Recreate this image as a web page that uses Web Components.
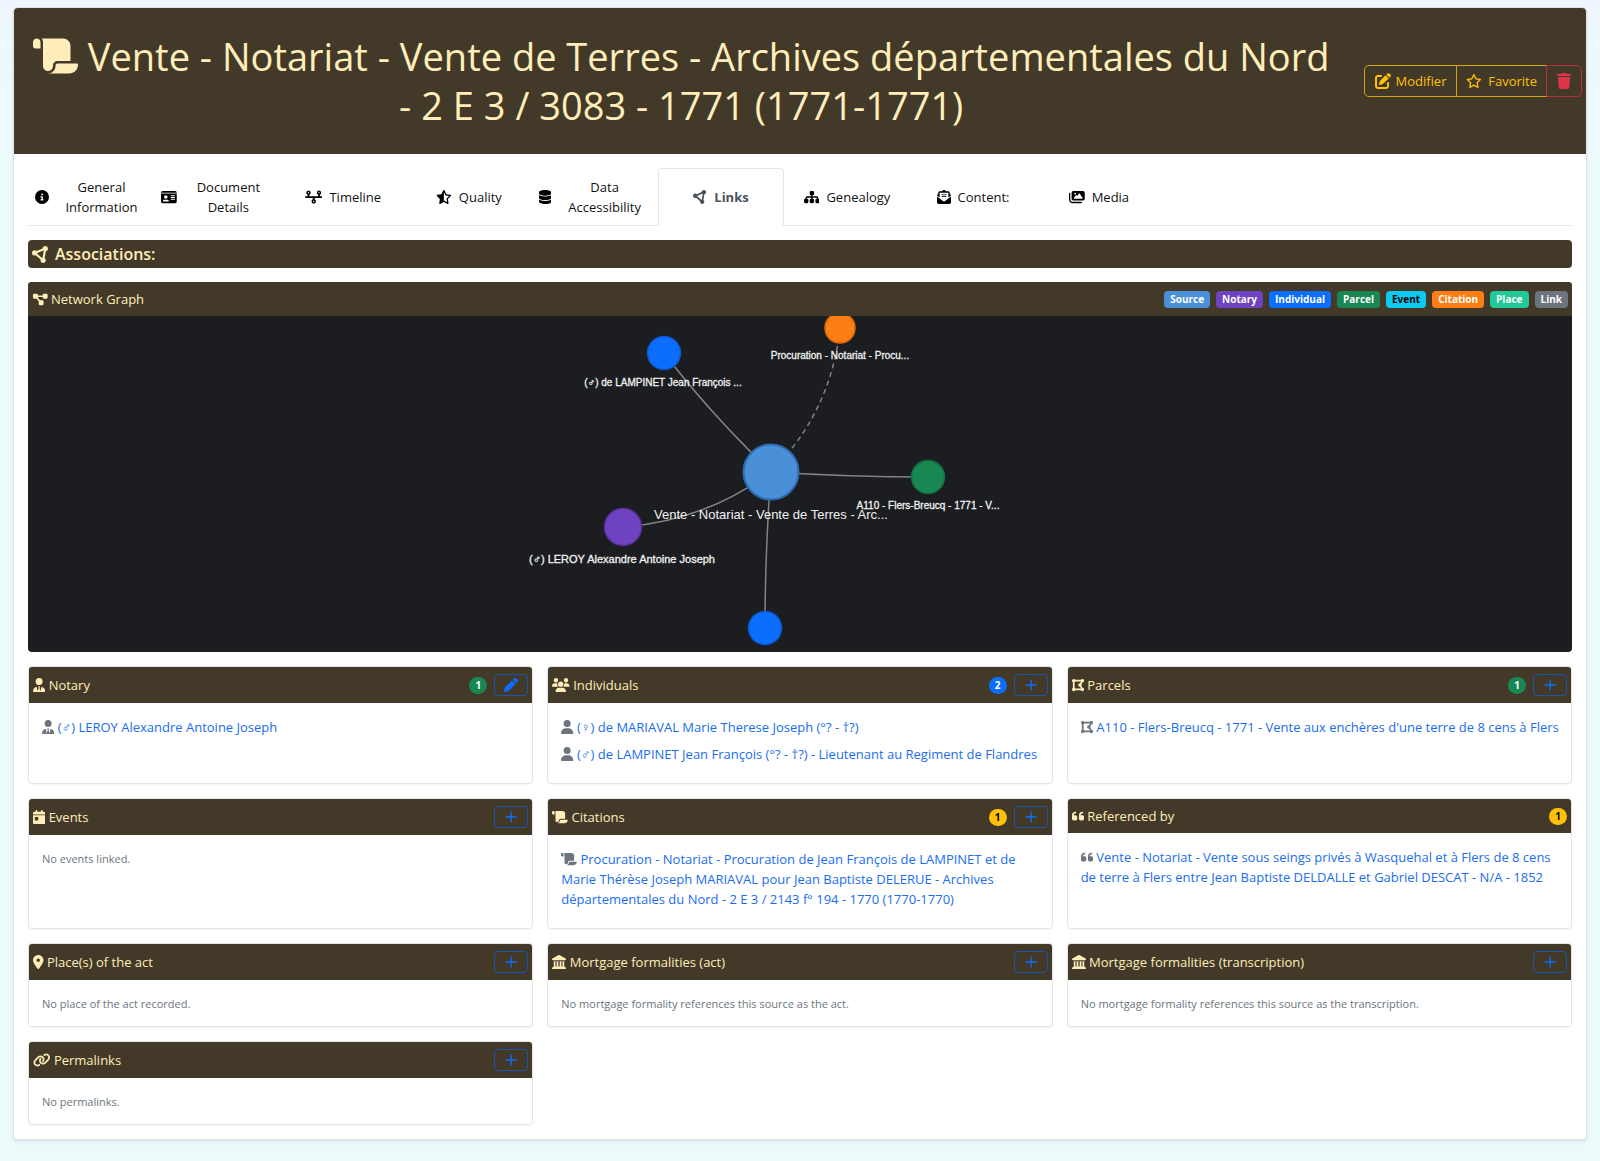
<!DOCTYPE html>
<html lang="en">
<head>
<meta charset="utf-8">
<meta name="viewport" content="width=device-width, initial-scale=1">
<title>Vente - Notariat - Links</title>
<style>
  :root {
    --brown: #433929;
    --cream: #ffeeba;
    --link: #1a6df0;
    --muted: #6c757d;
    --line: #e3e5e8;
  }
  * { box-sizing: border-box; }
  body {
    margin: 0;
    min-height: 100vh;
    padding: 8px 14px 21px;
    background: linear-gradient(#f0f6ff, #ecfafc 90px);
    color: #111;
    font: 13px/20px "Segoe UI", "Open Sans", "Noto Sans", sans-serif;
  }
</style>
</head>
<body>

<source-page>
  <page-header slot="header">
    <fa-icon slot="icon" name="scroll"></fa-icon>
    Vente - Notariat - Vente de Terres - Archives départementales du Nord - 2 E 3 / 3083 - 1771 (1771-1771)
    <action-group slot="actions"></action-group>
  </page-header>

  <tab-bar>
    <tab-item icon="info">General Information</tab-item>
    <tab-item icon="idcard">Document Details</tab-item>
    <tab-item icon="timeline">Timeline</tab-item>
    <tab-item icon="starhalf">Quality</tab-item>
    <tab-item icon="database">Data Accessibility</tab-item>
    <tab-item icon="nodes" active>Links</tab-item>
    <tab-item icon="sitemap">Genealogy</tab-item>
    <tab-item icon="envelope">Content:</tab-item>
    <tab-item icon="images">Media</tab-item>
  </tab-bar>

  <section-title icon="nodes">Associations:</section-title>

  <graph-panel heading="Network Graph">
    <legend-badge slot="legend" style="--c:#4a90d9">Source</legend-badge>
    <legend-badge slot="legend" style="--c:#6f42c1">Notary</legend-badge>
    <legend-badge slot="legend" style="--c:#0d6efd">Individual</legend-badge>
    <legend-badge slot="legend" style="--c:#198754">Parcel</legend-badge>
    <legend-badge slot="legend" style="--c:#0dcaf0;--t:#000">Event</legend-badge>
    <legend-badge slot="legend" style="--c:#fd7e14">Citation</legend-badge>
    <legend-badge slot="legend" style="--c:#20c997">Place</legend-badge>
    <legend-badge slot="legend" style="--c:#6c757d">Link</legend-badge>
  </graph-panel>

  <card-grid>
    <link-card icon="usertie" heading="Notary" count="1" tone="green" action="edit">
      <link-row icon="usertie">(♂) LEROY Alexandre Antoine Joseph</link-row>
    </link-card>
    <link-card icon="users" heading="Individuals" count="2" tone="blue" action="add">
      <link-row icon="user">(♀) de MARIAVAL Marie Therese Joseph (°? - †?)</link-row>
      <link-row icon="user">(♂) de LAMPINET Jean François (°? - †?) - Lieutenant au Regiment de Flandres</link-row>
    </link-card>
    <link-card icon="polygon" heading="Parcels" count="1" tone="green" action="add">
      <link-row icon="polygon">A110 - Flers-Breucq - 1771 - Vente aux enchères d'une terre de 8 cens à Flers</link-row>
    </link-card>
    <link-card icon="calendar" heading="Events" action="add">
      <empty-note>No events linked.</empty-note>
    </link-card>
    <link-card icon="scroll" heading="Citations" count="1" tone="yellow" action="add">
      <link-row icon="scroll">Procuration - Notariat - Procuration de Jean François de LAMPINET et de Marie Thérèse Joseph MARIAVAL pour Jean Baptiste DELERUE - Archives départementales du Nord - 2 E 3 / 2143 f° 194 - 1770 (1770-1770)</link-row>
    </link-card>
    <link-card icon="quote" heading="Referenced by" count="1" tone="yellow">
      <link-row icon="quote">Vente - Notariat - Vente sous seings privés à Wasquehal et à Flers de 8 cens de terre à Flers entre Jean Baptiste DELDALLE et Gabriel DESCAT - N/A - 1852</link-row>
    </link-card>
    <link-card icon="pin" heading="Place(s) of the act" action="add">
      <empty-note>No place of the act recorded.</empty-note>
    </link-card>
    <link-card icon="landmark" heading="Mortgage formalities (act)" action="add">
      <empty-note>No mortgage formality references this source as the act.</empty-note>
    </link-card>
    <link-card icon="landmark" heading="Mortgage formalities (transcription)" action="add">
      <empty-note>No mortgage formality references this source as the transcription.</empty-note>
    </link-card>
    <link-card icon="link" heading="Permalinks" action="add">
      <empty-note>No permalinks.</empty-note>
    </link-card>
  </card-grid>
</source-page>

<script>
const BAR = 'c0-8.8 7.2-16 16-16H496c8.8 0 16 7.2 16 16s-7.2 16-16 16H368c-8.8 0-16-7.2-16-16z';
const ICONS = {
  scroll: [576, 'M0 80v48c0 17.7 14.3 32 32 32H48 96V80c0-26.5-21.5-48-48-48S0 53.5 0 80zM112 32c10 13.4 16 30 16 48V384c0 35.3 28.7 64 64 64s64-28.7 64-64v-5.3c0-32.4 26.3-58.7 58.7-58.7H480V128c0-53-43-96-96-96H112zM464 480c61.9 0 112-50.1 112-112c0-8.8-7.2-16-16-16H314.7c-14.7 0-26.7 11.9-26.7 26.7V384c0 53-43 96-96 96H368h96z'],
  info: [512, 'M256 512A256 256 0 1 0 256 0a256 256 0 1 0 0 512zM216 336h24V272H216c-13.3 0-24-10.7-24-24s10.7-24 24-24h48c13.3 0 24 10.7 24 24v88h8c13.3 0 24 10.7 24 24s-10.7 24-24 24H216c-13.3 0-24-10.7-24-24s10.7-24 24-24zm40-208a32 32 0 1 1 0 64 32 32 0 1 1 0-64z'],
  idcard: [576, 'M0 96l576 0c0-35.3-28.7-64-64-64H64C28.7 32 0 60.7 0 96zm0 32V416c0 35.3 28.7 64 64 64H512c35.3 0 64-28.7 64-64V128H0zM64 405.3c0-29.5 23.9-53.3 53.3-53.3H234.7c29.5 0 53.3 23.9 53.3 53.3c0 5.9-4.8 10.7-10.7 10.7H74.7c-5.9 0-10.7-4.8-10.7-10.7zM176 192a64 64 0 1 1 0 128 64 64 0 1 1 0-128zM352 208' + BAR + 'M352 272' + BAR + 'M352 336' + BAR],
  timeline: [640, 'M128 72a24 24 0 1 1 0 48 24 24 0 1 1 0-48zm32 97.3c28.3-12.3 48-40.5 48-73.3c0-44.2-35.8-80-80-80S48 51.8 48 96c0 32.8 19.7 61 48 73.3V224H32c-17.7 0-32 14.3-32 32s14.3 32 32 32H288v54.7c-28.3 12.3-48 40.5-48 73.3c0 44.2 35.8 80 80 80s80-35.8 80-80c0-32.8-19.7-61-48-73.3V288H608c17.7 0 32-14.3 32-32s-14.3-32-32-32H544V169.3c28.3-12.3 48-40.5 48-73.3c0-44.2-35.8-80-80-80s-80 35.8-80 80c0 32.8 19.7 61 48 73.3V224H160V169.3zM488 96a24 24 0 1 1 48 0 24 24 0 1 1 -48 0zM320 392a24 24 0 1 1 0 48 24 24 0 1 1 0-48z'],
  starhalf: [576, 'M309.5 13.5C305.5 5.2 297.1 0 287.9 0s-17.5 5.2-21.6 13.5L197.7 154.8 44.5 177.5c-9 1.3-16.5 7.6-19.3 16.3s-.5 18.1 5.9 24.5L142.2 328.4 116 483.9c-1.5 9 2.2 18.1 9.7 23.5s17.3 6 25.3 1.7l137-73.2 137 73.2c8.1 4.3 17.9 3.7 25.3-1.7s11.2-14.5 9.7-23.5L433.6 328.4 544.8 218.2c6.5-6.4 8.7-15.9 5.9-24.5s-10.3-14.9-19.3-16.3L378.1 154.8 309.5 13.5zM288 384.7V79.1l52.5 108.1c3.5 7.1 10.2 12.1 18.1 13.3l118.3 17.5L391 303c-5.5 5.5-8.1 13.3-6.8 21l20.2 119.6L299.2 387.5c-3.5-1.9-7.4-2.8-11.2-2.8z'],
  star: [576, 'M287.9 0c9.2 0 17.6 5.2 21.6 13.5l68.6 141.3 153.2 22.6c9 1.3 16.5 7.6 19.3 16.3s.5 18.1-5.9 24.5L433.6 328.4l26.2 155.6c1.5 9-2.2 18.1-9.7 23.5s-17.3 6-25.3 1.7l-137-73.2L151 509.1c-8.1 4.3-17.9 3.7-25.3-1.7s-11.2-14.5-9.7-23.5l26.2-155.6L31.1 218.2c-6.5-6.4-8.7-15.9-5.9-24.5s10.3-14.9 19.3-16.3l153.2-22.6L266.3 13.5C270.4 5.2 278.7 0 287.9 0zm0 79L235.4 187.2c-3.5 7.1-10.2 12.1-18.1 13.3L99 217.9 184.9 303c5.5 5.5 8.1 13.3 6.8 21L171.4 443.7l105.2-56.2c7.1-3.8 15.6-3.8 22.6 0l105.2 56.2L384.2 324.1c-1.3-7.7 1.2-15.5 6.8-21l85.9-85.1L358.6 200.5c-7.8-1.2-14.6-6.1-18.1-13.3L287.9 79z'],
  database: [448, 'M448 80v48c0 44.2-100.3 80-224 80S0 172.2 0 128V80C0 35.8 100.3 0 224 0S448 35.8 448 80zM393.2 214.7c20.8-7.4 39.9-16.9 54.8-28.6V288c0 44.2-100.3 80-224 80S0 332.2 0 288V186.1c14.9 11.8 34 21.2 54.8 28.6C99.7 230.7 159.5 240 224 240s124.3-9.3 169.2-25.3zM0 346.1c14.9 11.8 34 21.2 54.8 28.6C99.7 390.7 159.5 400 224 400s124.3-9.3 169.2-25.3c20.8-7.4 39.9-16.9 54.8-28.6V432c0 44.2-100.3 80-224 80S0 476.2 0 432V346.1z'],
  nodes: [512, 'M418.4 157.9c35.3-8.3 61.6-40 61.6-77.9c0-44.2-35.8-80-80-80c-43.4 0-78.7 34.5-80 77.5L136.2 151.1C121.7 136.8 101.9 128 80 128c-44.2 0-80 35.8-80 80s35.8 80 80 80c12.2 0 23.8-2.7 34.1-7.6L259.7 407.8c-2.4 7.6-3.7 15.8-3.7 24.2c0 44.2 35.8 80 80 80s80-35.8 80-80c0-27.7-14-52.1-35.4-66.4l37.8-207.7zM156.3 232.2c2.2-6.9 3.5-14.2 3.7-21.7l183.8-73.5c3.6 3.5 7.4 6.7 11.6 9.5L317.6 354.1c-5.5 1.3-10.8 3.1-15.8 5.5L156.3 232.2z'],
  sitemap: [576, 'M208 80c0-26.5 21.5-48 48-48h64c26.5 0 48 21.5 48 48v64c0 26.5-21.5 48-48 48h-8v40H464c30.9 0 56 25.1 56 56v32h8c26.5 0 48 21.5 48 48v64c0 26.5-21.5 48-48 48H464c-26.5 0-48-21.5-48-48V368c0-26.5 21.5-48 48-48h8V288c0-4.4-3.6-8-8-8H312v40h8c26.5 0 48 21.5 48 48v64c0 26.5-21.5 48-48 48H256c-26.5 0-48-21.5-48-48V368c0-26.5 21.5-48 48-48h8V280H112c-4.4 0-8 3.6-8 8v32h8c26.5 0 48 21.5 48 48v64c0 26.5-21.5 48-48 48H48c-26.5 0-48-21.5-48-48V368c0-26.5 21.5-48 48-48h8V288c0-30.9 25.1-56 56-56H264V192h-8c-26.5 0-48-21.5-48-48V80z'],
  envelope: [512, 'M215.4 96H144 107.8 96v8.8V144v40.4 89L.2 202.5c1.6-18.1 10.9-34.9 25.7-45.8L48 140.3V96c0-26.5 21.5-48 48-48h76.6l49.9-36.9C232.2 3.9 243.9 0 256 0s23.8 3.9 33.5 11L339.4 48H416c26.5 0 48 21.5 48 48v44.3l22.1 16.4c14.8 10.9 24.1 27.7 25.7 45.8L416 273.4v-89V144 104.8 96H404.2 368 296.6 215.4zM0 448V242.1L217.6 403.3c11.1 8.2 24.6 12.7 38.4 12.7s27.3-4.4 38.4-12.7L512 242.1V448c0 35.3-28.7 64-64 64H64c-35.3 0-64-28.7-64-64zM176 160H336c8.8 0 16 7.2 16 16s-7.2 16-16 16H176c-8.8 0-16-7.2-16-16s7.2-16 16-16zm0 64H336c8.8 0 16 7.2 16 16s-7.2 16-16 16H176c-8.8 0-16-7.2-16-16s7.2-16 16-16z'],
  images: [576, 'M160 32c-35.3 0-64 28.7-64 64V320c0 35.3 28.7 64 64 64H512c35.3 0 64-28.7 64-64V96c0-35.3-28.7-64-64-64H160zM396 138.7l96 144c4.9 7.4 5.4 16.8 1.2 24.6S480.9 320 472 320H328 280 200c-9.2 0-17.6-5.3-21.6-13.6s-2.9-18.2 2.9-25.4l64-80c4.6-5.7 11.4-9 18.7-9s14.2 3.3 18.7 9l17.3 21.6 56-84C360.5 132 368 128 376 128s15.5 4 20 10.7zM192 128a32 32 0 1 1 64 0 32 32 0 1 1 -64 0zM48 120c0-13.3-10.7-24-24-24S0 106.7 0 120V344c0 75.1 60.9 136 136 136H456c13.3 0 24-10.7 24-24s-10.7-24-24-24H136c-48.6 0-88-39.4-88-88V120z'],
  diagram: [576, 'M0 80C0 53.5 21.5 32 48 32h96c26.5 0 48 21.5 48 48V96H384V80c0-26.5 21.5-48 48-48h96c26.5 0 48 21.5 48 48v96c0 26.5-21.5 48-48 48H432c-26.5 0-48-21.5-48-48V160H192v16c0 1.7-.1 3.4-.3 5L272 288h96c26.5 0 48 21.5 48 48v96c0 26.5-21.5 48-48 48H272c-26.5 0-48-21.5-48-48V336c0-1.7 .1-3.4 .3-5L144 224H48c-26.5 0-48-21.5-48-48V80z'],
  edit: [512, 'M471.6 21.7c-21.9-21.9-57.3-21.9-79.2 0L362.3 51.7l97.9 97.9 30.1-30.1c21.9-21.9 21.9-57.3 0-79.2L471.6 21.7zm-299.2 220c-6.1 6.1-10.8 13.6-13.5 21.9l-29.6 88.8c-2.9 8.6-.6 18.1 5.8 24.6s15.9 8.7 24.6 5.8l88.8-29.6c8.2-2.7 15.7-7.4 21.9-13.5L437.7 172.3 339.7 74.3 172.4 241.7zM96 64C43 64 0 107 0 160V416c0 53 43 96 96 96H352c53 0 96-43 96-96V320c0-17.7-14.3-32-32-32s-32 14.3-32 32v96c0 17.7-14.3 32-32 32H96c-17.7 0-32-14.3-32-32V160c0-17.7 14.3-32 32-32h96c17.7 0 32-14.3 32-32s-14.3-32-32-32H96z'],
  trash: [448, 'M135.2 17.7L128 32H32C14.3 32 0 46.3 0 64S14.3 96 32 96H416c17.7 0 32-14.3 32-32s-14.3-32-32-32H320l-7.2-14.3C307.4 6.8 296.3 0 284.2 0H163.8c-12.1 0-23.2 6.8-28.6 17.7zM416 128H32L53.2 467c1.6 25.3 22.6 45 47.9 45H346.9c25.3 0 46.3-19.7 47.9-45L416 128z'],
  usertie: [448, 'M96 128a128 128 0 1 0 256 0A128 128 0 1 0 96 128zm94.5 200.2l18.6 31L175.8 483.1l-36-146.9c-2-8.1-9.8-13.4-17.9-11.3C51.9 342.4 0 405.8 0 481.3c0 17 13.8 30.7 30.7 30.7H162.5c0 0 0 0 .1 0H168 280h5.5c0 0 0 0 .1 0H417.3c17 0 30.7-13.8 30.7-30.7c0-75.5-51.9-138.9-121.9-156.4c-8.1-2-15.9 3.3-17.9 11.3l-36 146.9L238.9 359.2l18.6-31c6.4-10.7-1.3-24.2-13.7-24.2H224 204.3c-12.4 0-20.1 13.6-13.7 24.2z'],
  users: [640, 'M144 0a80 80 0 1 1 0 160A80 80 0 1 1 144 0zM512 0a80 80 0 1 1 0 160A80 80 0 1 1 512 0zM0 298.7C0 239.8 47.8 192 106.7 192h42.7c15.9 0 31 3.5 44.6 9.7c-1.3 7.2-1.9 14.7-1.9 22.3c0 38.2 16.8 72.5 43.3 96c-.2 0-.4 0-.7 0H21.3C9.6 320 0 310.4 0 298.7zM405.3 320c-.2 0-.4 0-.7 0c26.6-23.5 43.3-57.8 43.3-96c0-7.6-.7-15-1.9-22.3c13.6-6.3 28.7-9.7 44.6-9.7h42.7C592.2 192 640 239.8 640 298.7c0 11.8-9.6 21.3-21.3 21.3H405.3zM224 224a96 96 0 1 1 192 0 96 96 0 1 1 -192 0zM128 485.3C128 411.7 187.7 352 261.3 352H378.7C452.3 352 512 411.7 512 485.3c0 14.7-11.9 26.7-26.7 26.7H154.7c-14.7 0-26.7-11.9-26.7-26.7z'],
  user: [448, 'M224 256A128 128 0 1 0 224 0a128 128 0 1 0 0 256zm-45.7 48C79.8 304 0 383.8 0 482.3C0 498.7 13.3 512 29.7 512H418.3c16.4 0 29.7-13.3 29.7-29.7C448 383.8 368.2 304 269.7 304H178.3z'],
  polygon: [448, 'M96 151.4V360.6c9.7 5.6 17.8 13.7 23.4 23.4H328.6c0-.1 .1-.2 .1-.3l-4.5-7.9-32-56 0 0c-1.4 .1-2.8 .1-4.2 .1c-35.3 0-64-28.7-64-64s28.7-64 64-64c1.4 0 2.8 0 4.2 .1l0 0 32-56 4.5-7.9-.1-.3H119.4c-5.6 9.7-13.7 17.8-23.4 23.4zM384.3 352c35.2 .2 63.7 28.7 63.7 64c0 35.3-28.7 64-64 64c-23.7 0-44.4-12.9-55.4-32H119.4c-11.1 19.1-31.7 32-55.4 32c-35.3 0-64-28.7-64-64c0-23.7 12.9-44.4 32-55.4V151.4C12.9 140.4 0 119.7 0 96C0 60.7 28.7 32 64 32c23.7 0 44.4 12.9 55.4 32H328.6c11.1-19.1 31.7-32 55.4-32c35.3 0 64 28.7 64 64c0 35.3-28.5 63.8-63.7 64l-4.5 7.9-32 56-2.3 4c4.2 8.5 6.5 18 6.5 28.1s-2.3 19.6-6.5 28.1l2.3 4 32 56 4.5 7.9z'],
  calendar: [448, 'M128 0c17.7 0 32 14.3 32 32V64H288V32c0-17.7 14.3-32 32-32s32 14.3 32 32V64h48c26.5 0 48 21.5 48 48v48H0V112C0 85.5 21.5 64 48 64H96V32c0-17.7 14.3-32 32-32zM0 192H448V464c0 26.5-21.5 48-48 48H48c-26.5 0-48-21.5-48-48V192zm80 64c-8.8 0-16 7.2-16 16v96c0 8.8 7.2 16 16 16h96c8.8 0 16-7.2 16-16V272c0-8.8-7.2-16-16-16H80z'],
  quote: [448, 'M0 216C0 149.7 53.7 96 120 96h8c17.7 0 32 14.3 32 32s-14.3 32-32 32h-8c-30.9 0-56 25.1-56 56v8h64c35.3 0 64 28.7 64 64v64c0 35.3-28.7 64-64 64H64c-35.3 0-64-28.7-64-64V320 288 216zm256 0c0-66.3 53.7-120 120-120h8c17.7 0 32 14.3 32 32s-14.3 32-32 32h-8c-30.9 0-56 25.1-56 56v8h64c35.3 0 64 28.7 64 64v64c0 35.3-28.7 64-64 64H320c-35.3 0-64-28.7-64-64V320 288 216z'],
  pin: [384, 'M215.7 499.2C267 435 384 279.4 384 192C384 86 298 0 192 0S0 86 0 192c0 87.4 117 243 168.3 307.2c12.3 15.3 35.1 15.3 47.4 0zM192 128a64 64 0 1 1 0 128 64 64 0 1 1 0-128z'],
  landmark: [512, 'M240.1 4.2c9.8-5.6 21.9-5.6 31.8 0l171.8 98.1L448 104l0 .9 47.9 27.4c12.6 7.2 18.8 22 15.1 36s-16.4 23.8-30.9 23.8H32c-14.5 0-27.2-9.8-30.9-23.8s2.5-28.8 15.1-36L64 104.9V104l4.4-1.6L240.1 4.2zM64 224h64V416h40V224h64V416h48V224h64V416h40V224h64V420.3c.6 .3 1.2 .7 1.8 1.1l48 32c11.7 7.8 17 22.4 12.9 35.9S494.1 512 480 512H32c-14.1 0-26.5-9.2-30.6-22.7s1.1-28.1 12.9-35.9l48-32c.6-.4 1.2-.7 1.8-1.1V224z'],
  link: [640, 'M579.8 267.7c56.5-56.5 56.5-148 0-204.5c-50-50-128.8-56.5-186.3-15.4l-1.6 1.1c-14.4 10.3-17.7 30.3-7.4 44.6s30.3 17.7 44.6 7.4l1.6-1.1c32.1-22.9 76-19.3 103.8 8.6c31.5 31.5 31.5 82.5 0 114L422.3 334.8c-31.5 31.5-82.5 31.5-114 0c-27.9-27.9-31.5-71.8-8.6-103.8l1.1-1.6c10.3-14.4 6.9-34.4-7.4-44.6s-34.4-6.9-44.6 7.4l-1.1 1.6C206.5 251.2 213 330 263 380c56.5 56.5 148 56.5 204.5 0L579.8 267.7zM60.2 244.3c-56.5 56.5-56.5 148 0 204.5c50 50 128.8 56.5 186.3 15.4l1.6-1.1c14.4-10.3 17.7-30.3 7.4-44.6s-30.3-17.7-44.6-7.4l-1.6 1.1c-32.1 22.9-76 19.3-103.8-8.6C74 372 74 321 105.5 289.5L217.7 177.2c31.5-31.5 82.5-31.5 114 0c27.9 27.9 31.5 71.8 8.6 103.9l-1.1 1.6c-10.3 14.4-6.9 34.4 7.4 44.6s34.4 6.9 44.6-7.4l1.1-1.6C433.5 260.8 427 182 377 132c-56.5-56.5-148-56.5-204.5 0L60.2 244.3z'],
  pen: [512, 'M362.7 19.3L314.3 67.7 444.3 197.7l48.4-48.4c25-25 25-65.5 0-90.5L453.3 19.3c-25-25-65.5-25-90.5 0zm-71 71L58.6 323.5c-10.4 10.4-18 23.3-22.2 37.4L1 481.2C-1.5 489.7 .8 498.8 7 505s15.3 8.5 23.7 6.1l120.3-35.4c14.1-4.2 27-11.8 37.4-22.2L421.7 220.3 291.7 90.3z'],
  plus: [448, 'M200 56h48v176h176v48H248v176h-48V280H24v-48h176z']
};

const define = (name, render) => customElements.define(name, class extends HTMLElement {
  connectedCallback() {
    if (this.shadowRoot) return;
    this.attachShadow({ mode: 'open' }).innerHTML =
      '<style>*{box-sizing:border-box}</style>' + render(this);
  }
});
const attr = (el, name) => el.getAttribute(name) || '';

define('fa-icon', el => {
  const [w, d] = ICONS[attr(el, 'name')];
  return `<style>
    :host { display: inline-block; line-height: 1; vertical-align: -0.125em; flex: none; }
    svg { display: block; height: 1em; fill: currentColor; }
  </style><svg viewBox="0 0 ${w} 512" aria-hidden="true"><path d="${d}"/></svg>`;
});

define('source-page', () => `<style>
    :host { display: block; background: #fff; border-radius: 4px; box-shadow: 0 0 0 1px #dfe3e6, 0 2px 4px rgba(0,0,0,.12); }
    main { display: flex; flex-direction: column; gap: 14px; padding: 14px; }
  </style><slot name="header"></slot><main><slot></slot></main>`);

define('page-header', () => `<style>
    :host { display: block; }
    header { display: flex; align-items: center; gap: 28px; padding: 24px 4px 24px 12px; background: var(--brown); border-radius: 4px 4px 0 0; }
    h1 { flex: 1; margin: 0; color: var(--cream); font-size: 38px; line-height: 49px; font-weight: 400; text-align: center; }
    ::slotted(fa-icon) { font-size: 40px; }
  </style><header><h1><slot name="icon"></slot> <slot></slot></h1><slot name="actions"></slot></header>`);

define('action-group', () => `<style>
    :host { display: flex; }
    button { display: flex; align-items: center; justify-content: center; height: 32px; padding: 0 10px; margin: 0; background: none; font: inherit; color: #ffc107; border: 1px solid #d9a50f; cursor: pointer; }
    button + button { margin-left: -1px; }
    .edit { gap: 4px; border-radius: 5px 0 0 5px; }
    .fav { gap: 6px; padding: 0 9px; }
    .del { color: #dc3545; border-color: #b5303d; border-radius: 0 5px 5px 0; }
    .big { font-size: 16px; }
    .mid { font-size: 14px; }
  </style>
  <button class="edit"><fa-icon class="big" name="edit"></fa-icon>Modifier</button>
  <button class="fav"><fa-icon class="mid" name="star"></fa-icon>Favorite</button>
  <button class="del" aria-label="Delete"><fa-icon class="big" name="trash"></fa-icon></button>`);

define('tab-bar', () => `<style>
    :host { display: block; }
    nav { display: flex; border-bottom: 1px solid var(--line); }
  </style><nav><slot></slot></nav>`);

define('tab-item', el => `<style>
    :host { display: flex; flex: 0 1 126px; margin-bottom: -1px; }
    a { flex: 1; display: flex; align-items: center; justify-content: center; gap: 7px; min-height: 58px; padding: 8px 6px; border: 1px solid transparent; border-radius: 4px 4px 0 0; color: #111; text-align: center; text-decoration: none; }
    a.on { background: #fff; border-color: var(--line) var(--line) #fff; color: #495057; font-weight: 700; }
    fa-icon { font-size: 14px; color: #000; }
    .on fa-icon { color: #495057; }
  </style><a href="#" class="${el.hasAttribute('active') ? 'on' : ''}"><fa-icon name="${attr(el, 'icon')}"></fa-icon><span><slot></slot></span></a>`);

define('section-title', el => `<style>
    :host { display: block; }
    h2 { display: flex; align-items: center; gap: 6px; margin: 0; padding: 4px; background: var(--brown); color: var(--cream); border-radius: 4px; font-size: 16px; line-height: 20px; font-weight: 600; }
    fa-icon { font-size: 17px; }
  </style><h2><fa-icon name="${attr(el, 'icon')}"></fa-icon><slot></slot></h2>`);

define('legend-badge', () => `<style>
    :host { display: block; padding: 0 6px; border-radius: 4px; background: var(--c); color: var(--t, #fff); font-size: 10px; line-height: 17px; font-weight: 700; }
  </style><slot></slot>`);

define('graph-panel', el => `<style>
    :host { display: block; border-radius: 4px; overflow: hidden; background: #1b1d20; }
    header { display: flex; align-items: center; justify-content: space-between; padding: 7px 4px 7px 5px; background: var(--brown); color: var(--cream); }
    .legend { display: flex; gap: 6px; }
    .name fa-icon { font-size: 13px; }
    svg { display: block; width: 100%; height: 336px; }
    .edge { fill: none; stroke: #848484; stroke-width: 1.5; }
    text { fill: #f2f2f2; stroke: #f2f2f2; stroke-width: .3; font-family: "Liberation Sans", Arial, "DejaVu Sans", sans-serif; font-size: 10px; text-anchor: middle; }
    .main { font-size: 13px; stroke: none; }
    .mid { font-size: 11px; }
  </style>
  <header><span class="name"><fa-icon name="diagram"></fa-icon> ${attr(el, 'heading')}</span><div class="legend"><slot name="legend"></slot></div></header>
  <svg viewBox="0 0 1544 336" role="img" aria-label="Network graph">
    <path class="edge" d="M636 37Q680 95 743 156"/>
    <path class="edge" d="M812 12Q803 96 743 156" stroke-dasharray="5 4"/>
    <path class="edge" d="M743 156Q822 161 900 161"/>
    <path class="edge" d="M743 156Q677 205 595 211"/>
    <path class="edge" d="M743 156Q737 236 737 312"/>
    <g stroke-width="1.5">
      <circle cx="636" cy="37" r="16.5" fill="#0d6efd" stroke="#0a58ca"/>
      <circle cx="812" cy="12" r="15" fill="#fd7e14" stroke="#d9690b"/>
      <circle cx="900" cy="161" r="16.5" fill="#198754" stroke="#146c43"/>
      <circle cx="595" cy="211" r="18.5" fill="#6f42c1" stroke="#59339d"/>
      <circle cx="737" cy="312" r="16.5" fill="#0d6efd" stroke="#0a58ca"/>
      <circle cx="743" cy="156" r="27.5" fill="#4a90d9" stroke="#2b6cb0" stroke-width="2"/>
    </g>
    <text x="635" y="70">(♂) de LAMPINET Jean François ...</text>
    <text x="812" y="43">Procuration - Notariat - Procu...</text>
    <text x="900" y="193">A110 - Flers-Breucq - 1771 - V...</text>
    <text x="594" y="247" class="mid">(♂) LEROY Alexandre Antoine Joseph</text>
    <text x="743" y="203" class="main">Vente - Notariat - Vente de Terres - Arc...</text>
  </svg>`);

define('card-grid', () => `<style>
    :host { display: grid; grid-template-columns: repeat(3, minmax(0, 1fr)); gap: 14px; }
  </style><slot></slot>`);

define('link-card', el => {
  const count = attr(el, 'count'), action = attr(el, 'action');
  return `<style>
    :host { display: block; border: 1px solid var(--line); border-radius: 4px; background: #fff; box-shadow: 0 1px 1px rgba(0,0,0,.04); overflow: hidden; }
    header { display: flex; align-items: center; gap: 7px; padding: 7px 4px; background: var(--brown); color: var(--cream); }
    h3 { flex: 1; margin: 0; font: inherit; }
    h3 fa-icon { font-size: 14px; }
    .count { min-width: 18px; padding: 0 6px; border-radius: 9px; text-align: center; font-size: 10px; line-height: 17px; font-weight: 700; color: #fff; }
    .green { background: #198754; } .blue { background: #0d6efd; } .yellow { background: #ffc107; color: #000; }
    button { display: flex; align-items: center; justify-content: center; width: 34px; height: 22px; padding: 0; border: 1px solid #1c55ad; border-radius: 4px; background: none; color: #0d6efd; cursor: pointer; font-size: 14px; }
    .body { display: flex; flex-direction: column; padding: 14px 8px 12px 13px; }
  </style>
  <header><h3><fa-icon name="${attr(el, 'icon')}"></fa-icon> ${attr(el, 'heading')}</h3>
    ${count ? `<span class="count ${attr(el, 'tone')}">${count}</span>` : ''}
    ${action ? `<button aria-label="${action}"><fa-icon name="${action === 'edit' ? 'pen' : 'plus'}"></fa-icon></button>` : ''}
  </header><div class="body"><slot></slot></div>`;
});

define('link-row', el => `<style>
    :host { display: block; margin-bottom: 7px; }
    a { color: var(--link); text-decoration: none; }
    fa-icon { color: var(--muted); font-size: 14px; }
  </style><fa-icon name="${attr(el, 'icon')}"></fa-icon> <a href="#"><slot></slot></a>`);

define('empty-note', () => `<style>
    :host { display: block; color: var(--muted); font-size: 11px; line-height: 20px; }
  </style><slot></slot>`);
</script>
</body>
</html>
